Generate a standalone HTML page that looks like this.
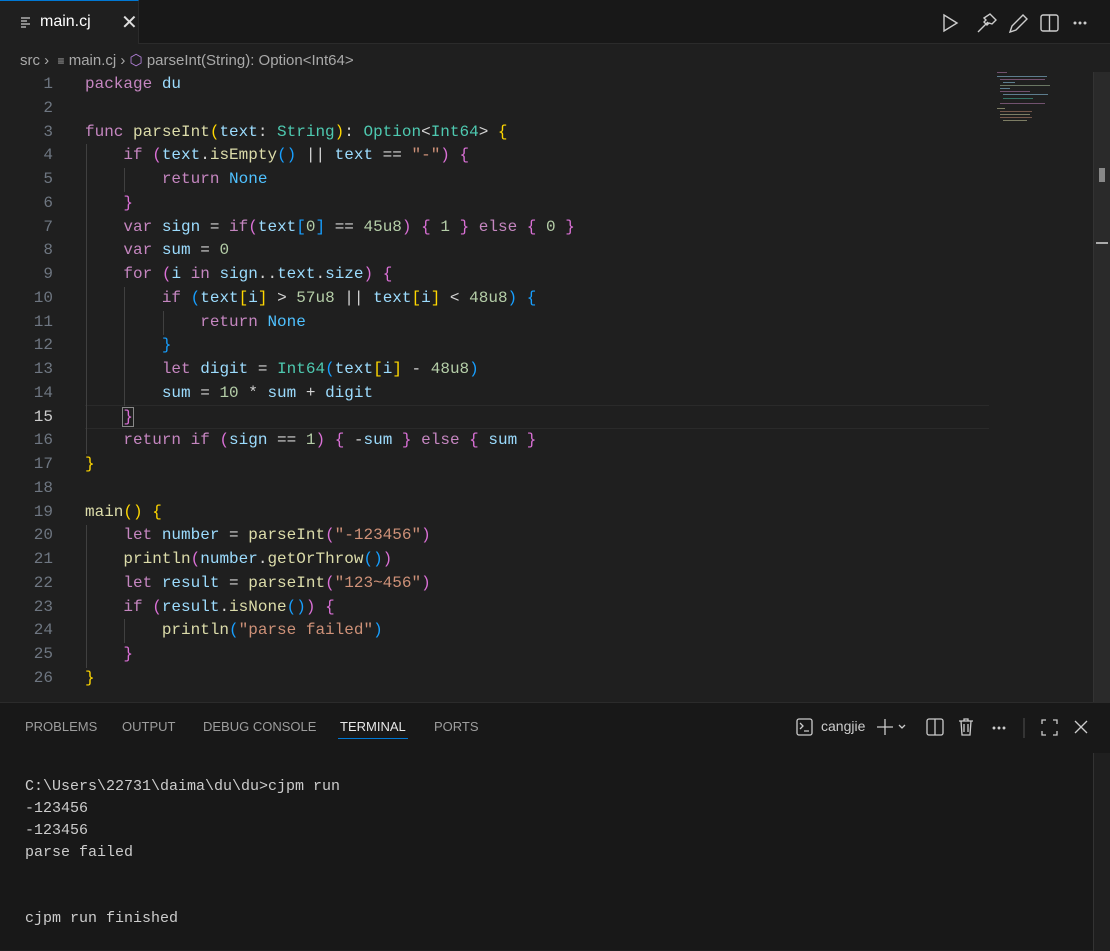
<!DOCTYPE html>
<html><head><meta charset="utf-8"><style>
*{margin:0;padding:0;box-sizing:border-box}
body{width:1110px;height:950px;background:#1f1f1f;overflow:hidden;position:relative;font-family:"Liberation Sans",sans-serif;color:#ccc}
.tabbar{position:absolute;left:0;top:0;width:1110px;height:44px;background:#181818;border-bottom:1px solid #2b2b2b}
.tab{position:absolute;left:0;top:0;width:139px;height:44px;background:#1f1f1f;border-top:1px solid #0078d4;border-right:1px solid #2b2b2b}
.tab .nm{position:absolute;left:40px;top:12px;font-size:16px;color:#fff}
.tab .x{position:absolute;left:121px;top:9px;font-size:20px;color:#ddd}
.bc{position:absolute;top:51px;left:20px;font-size:15px;color:#a9a9a9;white-space:nowrap}
.code{position:absolute;left:0;top:73px;font-family:"Liberation Mono",monospace;font-size:16px;line-height:23.76px;white-space:pre;color:#d4d4d4}
.ln{position:absolute;left:0;width:53px;text-align:right;color:#6e7681}
.cl{position:absolute;left:85px}
.k{color:#c586c0}.v{color:#9cdcfe}.t{color:#4ec9b0}.f{color:#dcdcaa}.n{color:#b5cea8}.s{color:#ce9178}.c{color:#4fc1ff}
.b1{color:#ffd700}.b2{color:#da70d6}.b3{color:#179fff}
.g{position:absolute;width:1px;background:#404040}
.panel{position:absolute;left:0;top:702px;width:1110px;height:248px;background:#181818;border-top:1px solid #2b2b2b}
.pt{position:absolute;top:16px;font-size:13px;color:#9d9d9d}
.term{position:absolute;left:25px;top:73px;font-family:"Liberation Mono",monospace;font-size:15px;line-height:22px;white-space:pre;color:#ccc}
.mm{position:absolute;height:1px;opacity:.5}
</style></head><body>
<div class="tabbar">
<div class="tab"><svg style="position:absolute;left:20px;top:15px" width="12" height="12"><path d="M1 2h9M1 5h6M1 8h9M1 11h5" stroke="#ccc" stroke-width="1.2"/></svg><span class="nm">main.cj</span><span class="x">✕</span></div>
<svg style="position:absolute;left:940px;top:12px" width="160" height="22" fill="none" stroke="#ccc" stroke-width="1.4">
<path d="M4 3l13 8-13 8z"/>
<path d="M38 20l10-10M44 6l6-4 6 6-4 4-3-1-2 2-3-3 2-2z"/>
<path d="M70 20l2-6 11-11 4 4-11 11z"/>
<rect x="101" y="3" width="17" height="16" rx="2"/><path d="M109.5 3v16"/>
<circle cx="135" cy="11" r=".8" fill="#ccc"/><circle cx="140" cy="11" r=".8" fill="#ccc"/><circle cx="145" cy="11" r=".8" fill="#ccc"/>
</svg>
</div>
<div class="bc">src <span style="color:#aaa">›</span> &nbsp;<span style="font-size:12px">≡</span> main.cj › <span style="color:#b180d7">⬡</span> parseInt(String): Option&lt;Int64&gt;</div>
<div style="position:absolute;left:85px;top:405px;width:904px;height:24px;border-top:1px solid #2a2a2a;border-bottom:1px solid #2a2a2a"></div>
<div class="g" style="left:86px;top:144px;height:310px"></div>
<div class="g" style="left:124px;top:168px;height:24px"></div>
<div class="g" style="left:124px;top:287px;height:119px"></div>
<div class="g" style="left:163px;top:311px;height:24px"></div>
<div class="g" style="left:86px;top:525px;height:143px"></div>
<div class="g" style="left:124px;top:619px;height:24px"></div>
<div class="code">
<div class="ln" style="top:0">1</div><div class="cl" style="top:0"><span class="k">package</span> <span class="v">du</span></div>
<div class="ln" style="top:23.76px">2</div>
<div class="ln" style="top:47.52px">3</div><div class="cl" style="top:47.52px"><span class="k">func</span> <span class="f">parseInt</span><span class="b1">(</span><span class="v">text</span>: <span class="t">String</span><span class="b1">)</span>: <span class="t">Option</span>&lt;<span class="t">Int64</span>&gt; <span class="b1">{</span></div>
<div class="ln" style="top:71.28px">4</div><div class="cl" style="top:71.28px">    <span class="k">if</span> <span class="b2">(</span><span class="v">text</span>.<span class="f">isEmpty</span><span class="b3">()</span> || <span class="v">text</span> == <span class="s">"-"</span><span class="b2">)</span> <span class="b2">{</span></div>
<div class="ln" style="top:95.04px">5</div><div class="cl" style="top:95.04px">        <span class="k">return</span> <span class="c">None</span></div>
<div class="ln" style="top:118.8px">6</div><div class="cl" style="top:118.8px">    <span class="b2">}</span></div>
<div class="ln" style="top:142.56px">7</div><div class="cl" style="top:142.56px">    <span class="k">var</span> <span class="v">sign</span> = <span class="k">if</span><span class="b2">(</span><span class="v">text</span><span class="b3">[</span><span class="n">0</span><span class="b3">]</span> == <span class="n">45u8</span><span class="b2">)</span> <span class="b2">{</span> <span class="n">1</span> <span class="b2">}</span> <span class="k">else</span> <span class="b2">{</span> <span class="n">0</span> <span class="b2">}</span></div>
<div class="ln" style="top:166.32px">8</div><div class="cl" style="top:166.32px">    <span class="k">var</span> <span class="v">sum</span> = <span class="n">0</span></div>
<div class="ln" style="top:190.08px">9</div><div class="cl" style="top:190.08px">    <span class="k">for</span> <span class="b2">(</span><span class="v">i</span> <span class="k">in</span> <span class="v">sign</span>..<span class="v">text</span>.<span class="v">size</span><span class="b2">)</span> <span class="b2">{</span></div>
<div class="ln" style="top:213.84px">10</div><div class="cl" style="top:213.84px">        <span class="k">if</span> <span class="b3">(</span><span class="v">text</span><span class="b1">[</span><span class="v">i</span><span class="b1">]</span> &gt; <span class="n">57u8</span> || <span class="v">text</span><span class="b1">[</span><span class="v">i</span><span class="b1">]</span> &lt; <span class="n">48u8</span><span class="b3">)</span> <span class="b3">{</span></div>
<div class="ln" style="top:237.6px">11</div><div class="cl" style="top:237.6px">            <span class="k">return</span> <span class="c">None</span></div>
<div class="ln" style="top:261.36px">12</div><div class="cl" style="top:261.36px">        <span class="b3">}</span></div>
<div class="ln" style="top:285.12px">13</div><div class="cl" style="top:285.12px">        <span class="k">let</span> <span class="v">digit</span> = <span class="t">Int64</span><span class="b3">(</span><span class="v">text</span><span class="b1">[</span><span class="v">i</span><span class="b1">]</span> - <span class="n">48u8</span><span class="b3">)</span></div>
<div class="ln" style="top:308.88px">14</div><div class="cl" style="top:308.88px">        <span class="v">sum</span> = <span class="n">10</span> * <span class="v">sum</span> + <span class="v">digit</span></div>
<div class="ln" style="top:332.64px;color:#ccc">15</div><div class="cl" style="top:332.64px">    <span class="b2" style="outline:1px solid #888">}</span></div>
<div class="ln" style="top:356.4px">16</div><div class="cl" style="top:356.4px">    <span class="k">return</span> <span class="k">if</span> <span class="b2">(</span><span class="v">sign</span> == <span class="n">1</span><span class="b2">)</span> <span class="b2">{</span> -<span class="v">sum</span> <span class="b2">}</span> <span class="k">else</span> <span class="b2">{</span> <span class="v">sum</span> <span class="b2">}</span></div>
<div class="ln" style="top:380.16px">17</div><div class="cl" style="top:380.16px"><span class="b1">}</span></div>
<div class="ln" style="top:403.92px">18</div>
<div class="ln" style="top:427.68px">19</div><div class="cl" style="top:427.68px"><span class="f">main</span><span class="b1">()</span> <span class="b1">{</span></div>
<div class="ln" style="top:451.44px">20</div><div class="cl" style="top:451.44px">    <span class="k">let</span> <span class="v">number</span> = <span class="f">parseInt</span><span class="b2">(</span><span class="s">"-123456"</span><span class="b2">)</span></div>
<div class="ln" style="top:475.2px">21</div><div class="cl" style="top:475.2px">    <span class="f">println</span><span class="b2">(</span><span class="v">number</span>.<span class="f">getOrThrow</span><span class="b3">()</span><span class="b2">)</span></div>
<div class="ln" style="top:498.96px">22</div><div class="cl" style="top:498.96px">    <span class="k">let</span> <span class="v">result</span> = <span class="f">parseInt</span><span class="b2">(</span><span class="s">"123~456"</span><span class="b2">)</span></div>
<div class="ln" style="top:522.72px">23</div><div class="cl" style="top:522.72px">    <span class="k">if</span> <span class="b2">(</span><span class="v">result</span>.<span class="f">isNone</span><span class="b3">()</span><span class="b2">)</span> <span class="b2">{</span></div>
<div class="ln" style="top:546.48px">24</div><div class="cl" style="top:546.48px">        <span class="f">println</span><span class="b3">(</span><span class="s">"parse failed"</span><span class="b3">)</span></div>
<div class="ln" style="top:570.24px">25</div><div class="cl" style="top:570.24px">    <span class="b2">}</span></div>
<div class="ln" style="top:594px">26</div><div class="cl" style="top:594px"><span class="b1">}</span></div>
</div>
<div style="position:absolute;left:1093px;top:72px;width:17px;height:630px;background:#2a2a2a;border-left:1px solid #333"></div>
<div style="position:absolute;left:1099px;top:168px;width:6px;height:14px;background:#888"></div>
<div style="position:absolute;left:1096px;top:242px;width:12px;height:2px;background:#aaa"></div>
<div class="mm" style="left:997px;top:72px;width:10px;background:#c586c0"></div>
<div class="mm" style="left:997px;top:76px;width:50px;background:#9cdcfe"></div>
<div class="mm" style="left:1000px;top:79px;width:45px;background:#c586c0"></div>
<div class="mm" style="left:1003px;top:82px;width:12px;background:#9cdcfe"></div>
<div class="mm" style="left:1000px;top:85px;width:50px;background:#b5cea8"></div>
<div class="mm" style="left:1000px;top:88px;width:10px;background:#9cdcfe"></div>
<div class="mm" style="left:1000px;top:91px;width:30px;background:#c586c0"></div>
<div class="mm" style="left:1003px;top:94px;width:45px;background:#9cdcfe"></div>
<div class="mm" style="left:1003px;top:98px;width:30px;background:#4ec9b0"></div>
<div class="mm" style="left:1000px;top:103px;width:45px;background:#c586c0"></div>
<div class="mm" style="left:997px;top:108px;width:8px;background:#dcdcaa"></div>
<div class="mm" style="left:1000px;top:111px;width:32px;background:#ce9178"></div>
<div class="mm" style="left:1000px;top:114px;width:30px;background:#dcdcaa"></div>
<div class="mm" style="left:1000px;top:117px;width:32px;background:#ce9178"></div>
<div class="mm" style="left:1003px;top:120px;width:24px;background:#dcdcaa"></div>
<div class="panel">
<span class="pt" style="left:25px">PROBLEMS</span>
<span class="pt" style="left:122px">OUTPUT</span>
<span class="pt" style="left:203px">DEBUG CONSOLE</span>
<span class="pt" style="left:340px;color:#e7e7e7">TERMINAL</span>
<div style="position:absolute;left:338px;top:35px;width:70px;height:1px;background:#0078d4"></div>
<span class="pt" style="left:434px">PORTS</span>
<svg style="position:absolute;left:795px;top:13px" width="300" height="22" fill="none" stroke="#ccc" stroke-width="1.3">
<rect x="2" y="3" width="15" height="16" rx="2"/><path d="M5 7l3 3-3 3M9 15h5"/>
<path d="M90 3v16M82 11h16M104 9l3 3 3-3"/>
<rect x="132" y="3" width="16" height="16" rx="2"/><path d="M140 3v16"/>
<path d="M164 5h14M169 5v-2h4v2M166 5l1 14h8l1-14M169 8v8M173 8v8"/>
<circle cx="199" cy="12" r=".8" fill="#ccc"/><circle cx="204" cy="12" r=".8" fill="#ccc"/><circle cx="209" cy="12" r=".8" fill="#ccc"/>
<path d="M229 2v20" stroke="#444"/>
<path d="M247 8V4h4M258 4h4v4M262 15v4h-4M251 19h-4v-4"/>
<path d="M280 5l12 12M292 5l-12 12"/>
</svg>
<span style="position:absolute;left:821px;top:15px;font-size:14px;color:#ccc">cangjie</span>
<div style="position:absolute;left:1093px;top:50px;width:17px;height:198px;background:#1f1f1f;border-left:1px solid #333"></div>
<div class="term">C:\Users\22731\daima\du\du&gt;cjpm run
-123456
-123456
parse failed


cjpm run finished</div>
</div>
</body></html>
